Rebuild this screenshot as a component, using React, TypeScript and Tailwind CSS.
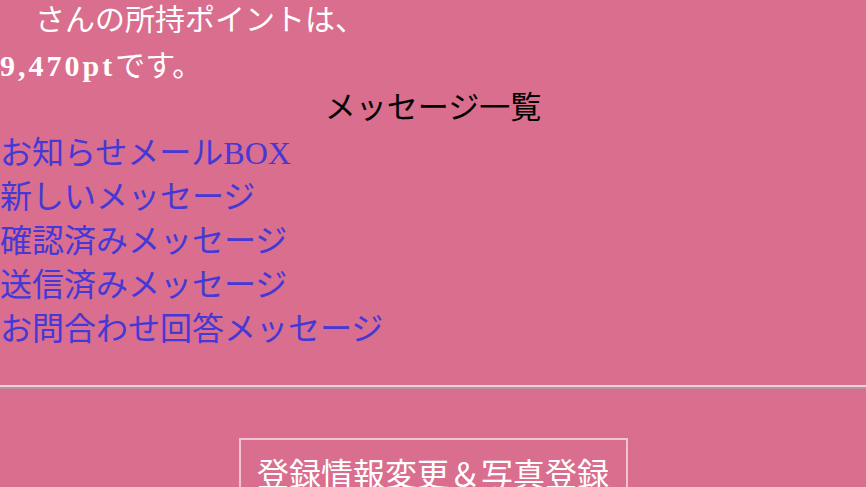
export default function App() {
  const links = [
    "お知らせメールBOX",
    "新しいメッセージ",
    "確認済みメッセージ",
    "送信済みメッセージ",
    "お問合わせ回答メッセージ",
  ];
  return (
    <div
      className="h-[487px] w-full overflow-hidden bg-[#d96e8e] text-[32px] leading-[44px]"
      style={{ fontFamily: '"Liberation Serif", "Noto Sans CJK JP", serif' }}
    >
      {/* ポイント */}
      <div className="mt-[-3px] text-[30px] leading-[46px] text-white">
        <p className="pl-[35px]">さんの所持ポイントは、</p>
        <p>
          <span className="font-bold tracking-[3px]">9,470pt</span>です。
        </p>
      </div>

      <h2 className="mt-[-3px] text-center text-[31px] leading-[44px] text-black">メッセージ一覧</h2>

      <ul className="mt-[1px]">
        {links.map((l) => (
          <li key={l}>
            <a href="#" className="text-[#4538d6]">
              {l}
            </a>
          </li>
        ))}
      </ul>

      <hr className="mt-[34px] border-t-[2px] border-b-[2px] border-t-[#ecd0da] border-b-[#b5939e]" />

      <div className="mt-[49px] flex justify-center">
        <button className="w-[389px] border-2 border-[#f2c4d3] pt-[13px] text-[32px] leading-[44px] text-white">
          登録情報変更＆写真登録
        </button>
      </div>
    </div>
  );
}
